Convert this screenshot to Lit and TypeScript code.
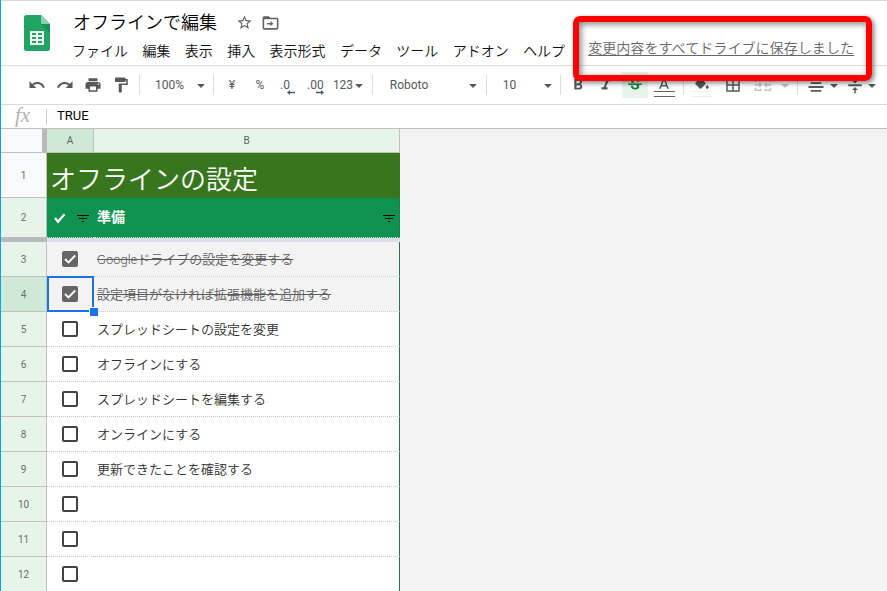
import { LitElement, html, css, svg, nothing } from "lit";
import { customElement } from "lit/decorators.js";
import { classMap } from "lit/directives/class-map.js";
import { styleMap } from "lit/directives/style-map.js";

const paths: Record<string, string> = {
  undo: "M12.5 8c-2.65 0-5.05.99-6.9 2.6L2 7v9h9l-3.62-3.62c1.39-1.16 3.16-1.88 5.12-1.88 3.54 0 6.55 2.31 7.6 5.5l2.37-.78C21.08 11.03 17.15 8 12.5 8z",
  redo: "M18.4 10.6C16.55 8.99 14.15 8 11.5 8c-4.65 0-8.58 3.03-9.96 7.22L3.9 16c1.05-3.19 4.05-5.5 7.6-5.5 1.95 0 3.73.72 5.12 1.88L13 16h9V7l-3.6 3.6z",
  print: "M19 8H5c-1.66 0-3 1.34-3 3v6h4v4h12v-4h4v-6c0-1.66-1.34-3-3-3zm-3 11H8v-5h8v5zm3-7c-.55 0-1-.45-1-1s.45-1 1-1 1 .45 1 1-.45 1-1 1zm-1-9H6v4h12V3z",
  paint: "M18 4V3c0-.55-.45-1-1-1H5c-.55 0-1 .45-1 1v4c0 .55.45 1 1 1h12c.55 0 1-.45 1-1V6h1v4H9v11c0 .55.45 1 1 1h2c.55 0 1-.45 1-1v-9h8V4h-3z",
  bold: "M15.6 10.79c.97-.67 1.65-1.77 1.65-2.79 0-2.26-1.75-4-4-4H7v14h7.04c2.09 0 3.71-1.7 3.71-3.79 0-1.52-.86-2.82-2.15-3.42zM10 6.5h3c.83 0 1.5.67 1.5 1.5s-.67 1.5-1.5 1.5h-3v-3zm3.5 9H10v-3h3.5c.83 0 1.5.67 1.5 1.5s-.67 1.5-1.5 1.5z",
  italic: "M10 4v3h2.21l-3.42 8H6v3h8v-3h-2.21l3.42-8H18V4z",
  strike: "M7.24 8.75c-.26-.48-.39-1.03-.39-1.67 0-.61.13-1.16.4-1.67.26-.5.63-.93 1.11-1.29.48-.35 1.05-.63 1.7-.83.66-.19 1.39-.29 2.18-.29.81 0 1.54.11 2.21.34.66.22 1.23.54 1.69.94.47.4.83.88 1.08 1.43s.38 1.15.38 1.81h-3.01c0-.31-.05-.59-.15-.85-.09-.27-.24-.49-.44-.68-.2-.19-.45-.33-.75-.44-.3-.1-.66-.16-1.06-.16-.39 0-.74.04-1.03.13s-.53.21-.72.36c-.19.16-.34.34-.44.55-.1.21-.15.43-.15.66 0 .48.25.88.74 1.21.38.25.77.48 1.41.7H7.39c-.05-.08-.11-.17-.15-.25zM21 12v-2H3v2h9.62c.18.07.4.14.55.2.37.17.66.34.87.51s.35.36.43.57c.07.2.11.43.11.69 0 .23-.05.45-.14.66-.09.2-.23.38-.42.53-.19.15-.42.26-.71.35-.29.08-.63.13-1.01.13-.43 0-.83-.04-1.18-.13s-.66-.23-.91-.42c-.25-.19-.45-.44-.59-.75s-.25-.76-.25-1.21H6.4c0 .55.08 1.13.24 1.58s.37.85.65 1.21c.28.35.6.66.98.92.37.26.78.48 1.22.65.44.17.9.3 1.38.39.48.08.96.13 1.44.13.8 0 1.53-.09 2.18-.28s1.21-.45 1.67-.79c.46-.34.82-.77 1.07-1.27s.38-1.07.38-1.71c0-.6-.1-1.14-.31-1.61-.05-.11-.11-.23-.17-.33H21z",
  color: "M11 3L5.5 17h2.25l1.12-3h6.25l1.12 3h2.25L13 3h-2zm-1.38 9L12 5.67 14.38 12H9.62z",
  fill: "M16.56 8.94L7.62 0 6.21 1.41l2.38 2.38-5.15 5.15c-.59.59-.59 1.54 0 2.12l5.5 5.5c.29.29.68.44 1.06.44s.77-.15 1.06-.44l5.5-5.5c.59-.58.59-1.53 0-2.12zM19 11.5s-2 2.17-2 3.5c0 1.1.9 2 2 2s2-.9 2-2c0-1.33-2-3.5-2-3.5z",
  borders: "M3 3v18h18V3H3zm8 16H5v-6h6v6zm0-8H5V5h6v6zm8 8h-6v-6h6v6zm0-8h-6V5h6v6z",
  merge: "M1 4h9v3H8V6H3v2H1V4zm13 0h9v4h-2V6h-5v1h-2V4zM1 16h2v2h5v-1h2v3H1v-4zm20 0h2v4h-9v-3h2v1h5v-2zM1 11h6V8.500l4 3.500-4 3.500V13H1v-2zm22 0h-6V8.500L13 12l4 3.500V13h6v-2z",
  align: "M2 3h20v2.500H2zM5 8.200h14v2.500H5zM2 13.400h20v2.500H2zM5 18.600h14v2.500H5z",
  valign: "M8 6h3V1h2v5h3l-4 4zM3 11h18v2.500H3zM8 18.500h3V23h2v-4.500h3l-4-4z",
  star: "M22 9.24l-7.190-.62L12 2 9.190 8.630 2 9.240l5.460 4.730L5.820 21 12 17.270 18.180 21l-1.630-7.030L22 9.240zM12 15.400l-3.760 2.270 1-4.280-3.320-2.880 4.380-.38L12 6.100l1.710 4.040 4.380.38-3.320 2.880 1 4.280L12 15.400z",
  folder: "M20 6h-8l-2-2H4c-1.100 0-2 .9-2 2v13c0 1.100.9 2 2 2h16c1.100 0 2-.9 2-2V8c0-1.100-.9-2-2-2zm0 13H4V8h16v11zM12 10.200l3.600 3.300-3.600 3.300v-2.300H7.500v-2H12z",
};

const icon = (name: string, size = 18) => html`
  <svg class="icon" width=${size} height=${size} viewBox="0 0 24 24">${svg`<path d=${paths[name]} />`}</svg>`;

type Tool = { kind: string; w: number; name?: string };
const t = (kind: string, w: number, name = ""): Tool => ({ kind, w, name });

const tools: Tool[] = [
  t("icon", 28, "undo"), t("icon", 28, "redo"), t("icon", 28, "print"), t("icon", 28, "paint"),
  t("sep", 9), t("text", 51, "100%"), t("arrow", 12), t("sep", 13),
  t("text", 24, "¥"), t("text", 32, "%"), t("dec", 23, ".0"), t("dec", 32, ".00"),
  t("text", 24, "123"), t("arrow", 8), t("sep", 19),
  t("text", 54, "Roboto"), t("gap", 31), t("arrow", 12), t("sep", 15),
  t("text", 31, "10"), t("gap", 17), t("arrow", 12), t("sep", 13),
  t("icon", 22, "bold"), t("icon", 33, "italic"), t("icon", 26, "strike"), t("icon", 32, "color"),
  t("sep", 6), t("icon", 31, "fill"), t("icon", 31, "borders"), t("icon", 29, "merge"), t("arrow", 15, "off"),
  t("sep", 11), t("icon", 25, "align"), t("arrow", 11), t("gap", 5), t("icon", 22, "valign"), t("arrow", 12),
];

const rows = [
  { n: 3, text: "Googleドライブの設定を変更する", done: true },
  { n: 4, text: "設定項目がなければ拡張機能を追加する", done: true, selected: true },
  { n: 5, text: "スプレッドシートの設定を変更" },
  { n: 6, text: "オフラインにする" },
  { n: 7, text: "スプレッドシートを編集する" },
  { n: 8, text: "オンラインにする" },
  { n: 9, text: "更新できたことを確認する" },
  { n: 10, text: "" },
  { n: 11, text: "" },
  { n: 12, text: "" },
] as { n: number; text: string; done?: boolean; selected?: boolean }[];

@customElement("app-root")
export class AppRoot extends LitElement {
  static styles = css`
    :host {
      display: flex;
      flex-direction: column;
      position: relative;
      box-sizing: border-box;
      width: 887px;
      height: 591px;
      overflow: hidden;
      background: #fff;
      border-left: 1px solid #03a5ec;
      font-family: Roboto, "Noto Sans CJK JP", sans-serif;
      color: #202124;
      white-space: nowrap;
    }
    * { box-sizing: border-box; }
    svg { display: block; flex: none; }
    .icon { fill: currentColor; }
    header {
      display: flex;
      height: 66px;
      flex: none;
      border-top: 1px solid #dadce0;
      border-bottom: 1px solid #dadce0;
      padding-left: 23px;
    }
    .logo { margin-top: 14px; }
    .heading { margin-left: 23px; padding-top: 7px; font-family: "Noto Sans CJK JP", sans-serif; font-weight: 350; }
    .titlebar { display: flex; align-items: center; height: 28px; color: #5f6368; }
    .title { font-size: 18px; line-height: 26px; margin-top: -3px; color: #000; width: 163px; }
    .titlebar .icon + .icon { margin-left: 8px; }
    .menu { display: flex; gap: 14.4px; margin-left: -1px; font-size: 14px; line-height: 28px; color: #111; }
    .status {
      margin: 32px 0 0 23px;
      font: 350 14px/28px "Noto Sans CJK JP", sans-serif;
      letter-spacing: 0.08px;
      color: #666;
      text-decoration: underline;
      text-underline-offset: 2px;
    }
    .toolbar {
      display: flex;
      align-items: center;
      flex: none;
      height: 39px;
      padding-left: 22px;
      border-bottom: 1px solid #dadce0;
      color: #55595d;
      font-size: 12px;
    }
    .tool { display: flex; align-items: center; justify-content: center; flex: none; height: 26px; position: relative; }
    .text { padding-bottom: 1px; }
    .sep::before { content: ""; width: 1px; height: 20px; background: #dadce0; }
    .arrow::before { content: ""; border: 4px solid transparent; border-top-color: currentColor; border-bottom: 0; margin-top: 2px; }
    .off, .merge { color: #c0c2c4; }
    .strike { background: #e6f4ea; color: #188038; }
    .color::after, .fill::after {
      content: "";
      position: absolute;
      bottom: 1px;
      width: 21px;
      height: 4px;
      border: solid #5f6368;
      border-width: 1px 0;
    }
    .fill::after { border-color: #eee; }
    .color .icon, .fill .icon { margin-top: -1px; }
    .dec { justify-content: flex-start; padding-left: 4px; }
    .dec svg { position: absolute; right: 4px; bottom: 3px; }
    .dec.long { padding-left: 8px; }
    .dec.long svg { right: 7px; }
    .formula {
      display: flex;
      align-items: center;
      flex: none;
      height: 24px;
      border-bottom: 1px solid #c0c0c0;
      font-size: 13px;
      color: #000;
    }
    .fx { width: 45px; padding-left: 14px; margin-top: -3px; font: italic 21px/20px "Liberation Serif", serif; color: #b4b4b4; }
    .value { border-left: 1px solid #d0d0d0; height: 16px; line-height: 14px; padding-left: 10px; }
    .body { display: flex; flex: 1; background: #f3f3f3; }
    .sheet { width: 399px; display: flex; flex-direction: column; }
    .line { display: grid; grid-template-columns: 46px 47px 306px; flex: none; }
    .cols { height: 24px; font-size: 10px; color: #5f6368; }
    .cols > * { display: flex; align-items: center; justify-content: center; border: solid #c0c0c0; border-width: 0 1px 1px 0; background: #e6f4ea; }
    .cols .corner { background: #f8f9fa; border-right: 5px solid #bababa; }
    .cols .active, .num.active { background: #ceead6; }
    .num {
      display: flex;
      align-items: center;
      justify-content: center;
      background: #e6f4ea;
      border: solid #c0c0c0;
      border-width: 0 1px 1px 0;
      font-size: 10px;
      color: #6a6e72;
    }
    .first { height: 45px; grid-template-rows: 45px; }
    .first .num { background: #f8f9fa; }
    .banner { grid-column: 2 / 4; background: #38761d; color: #fff; font: 350 26px/50px "Noto Sans CJK JP", sans-serif; padding-left: 3px; }
    .second { height: 40px; }
    .second .num { border-bottom: 0; padding-bottom: 1px; }
    .green { background: #0f9150; color: #fff; display: flex; align-items: center; justify-content: space-between; border-bottom: 1px dotted #e0e0e0; }
    .green.a { padding: 0 5px 0 6px; }
    .green.b { padding: 0 4px 0 3px; font-size: 14px; font-weight: 700; border-right: 1px solid #188045; }
    .green.b span { margin-top: -3px; }
    .green svg { margin-top: 1px; }
    .freeze { height: 4px; grid-template-columns: 46px 353px; }
    .freeze > :first-child { background: #bababa; margin-top: -1px; }
    .freeze > :last-child { background: #dadfe8; }
    .row { height: 35px; }
    .cell { display: flex; align-items: center; border-bottom: 1px dotted #ccc; background: #fff; font-size: 13px; font-weight: 350; color: #303030; position: relative; padding: 0 0 2px 3px; }
    .check { justify-content: center; padding: 0 1px 0 0; }
    .item { border-right: 1px solid #1b7a43; }
    .done .cell { background: #f3f3f3; color: #5c5c5c; }
    .done .item span { text-decoration: line-through; }
    .box { width: 16px; height: 16px; border: 2px solid #434343; border-radius: 2px; }
    .done .box { background: #666; border: 0; }
    .done .check { z-index: 1; }
    .cursor { position: absolute; inset: -1px 0 -1px 0; border: 2px solid #1a73e8; }
    .cursor::after { content: ""; position: absolute; right: -6px; bottom: -6px; width: 8px; height: 8px; background: #1a73e8; border: solid #fff; border-width: 1px 0 0 1px; }
    .callout {
      position: absolute;
      left: 572px;
      top: 16px;
      width: 299px;
      height: 65px;
      border: 6px solid #f00;
      border-radius: 7px;
      box-shadow: 2px 2px 5px rgba(0, 0, 0, 0.5), inset 2px 2px 6px rgba(0, 0, 0, 0.5);
    }
  `;

  private tool({ kind, w, name }: Tool) {
    const cls: Record<string, boolean> = { tool: true, [kind]: kind !== "icon", long: name === ".00" };
    if (name && (kind === "icon" || kind === "arrow")) cls[name] = true;
    return html`<div class=${classMap(cls)} style=${styleMap({ width: `${w}px` })}>
      ${kind === "icon" ? icon(name!) : kind === "text" ? name : nothing}
      ${kind === "dec"
        ? html`<span>${name}</span><svg width="8" height="5" viewBox="0 0 8 5" fill="currentColor">
            <path d=${name === ".0" ? "M0 2.500L3 0V1.700H8V3.300H3V5z" : "M8 2.500L5 0V1.700H0V3.300H5V5z"} /></svg>`
        : nothing}
    </div>`;
  }

  private filter() {
    return html`<svg width="12" height="7" viewBox="0 0 12 7"><path d="M0 0h12v1H0zM2 3h8v1H2zM5 6h2v1H5z" fill="#000" /></svg>`;
  }

  render() {
    return html`
      <header>
        <svg class="logo" width="26" height="36" viewBox="0 0 26 36">
          <path d="M2.500 0H17l9 9v24.500a2.500 2.500 0 0 1-2.500 2.500h-21A2.500 2.500 0 0 1 0 33.500v-31A2.500 2.500 0 0 1 2.500 0z" fill="#20a464" />
          <path d="M17 9h9v9z" fill="#178f55" />
          <path d="M17 0l9 9h-7.500A1.500 1.500 0 0 1 17 7.500z" fill="#8ed1b1" />
          <path d="M6 16h14v14H6zM8 18v2h4v-2zm6 0v2h4v-2zm-6 4v2h4v-2zm6 0v2h4v-2zm-6 4v2h4v-2zm6 0v2h4v-2z" fill="#f1f1f1" fill-rule="evenodd" />
        </svg>
        <div class="heading">
          <div class="titlebar"><span class="title">オフラインで編集</span>${icon("star", 17)}${icon("folder", 19)}</div>
          <nav class="menu">
            ${["ファイル", "編集", "表示", "挿入", "表示形式", "データ", "ツール", "アドオン", "ヘルプ"].map((m) => html`<span>${m}</span>`)}
          </nav>
        </div>
        <div class="status">変更内容をすべてドライブに保存しました</div>
      </header>
      <div class="toolbar">${tools.map((x) => this.tool(x))}</div>
      <div class="formula"><span class="fx">fx</span><span class="value">TRUE</span></div>
      <div class="body">
        <div class="sheet">
          <div class="line cols"><div class="corner"></div><div class="active">A</div><div>B</div></div>
          <div class="line first"><div class="num">1</div><div class="banner">オフラインの設定</div></div>
          <div class="line second">
            <div class="num">2</div>
            <div class="green a">
              <svg width="13" height="11" viewBox="0 0 13 11"><path d="M2 5L5 8.800L11.500 1.200" fill="none" stroke="#fff" stroke-width="2.200" /></svg>
              ${this.filter()}
            </div>
            <div class="green b"><span>準備</span>${this.filter()}</div>
          </div>
          <div class="line freeze"><div></div><div></div></div>
          ${rows.map(
            (r) => html`<div class=${classMap({ line: true, row: true, done: !!r.done })}>
              <div class=${classMap({ num: true, active: !!r.selected })}>${r.n}</div>
              <div class="cell check">
                <div class="box">
                  ${r.done ? html`<svg width="16" height="16" viewBox="0 0 16 16"><path d="M3 8l3.500 3.500L13.200 4.500" fill="none" stroke="#fff" stroke-width="1.900" /></svg>` : nothing}
                </div>
                ${r.selected ? html`<div class="cursor"></div>` : nothing}
              </div>
              <div class="cell item"><span>${r.text}</span></div>
            </div>`
          )}
        </div>
      </div>
      <div class="callout"></div>
    `;
  }
}
